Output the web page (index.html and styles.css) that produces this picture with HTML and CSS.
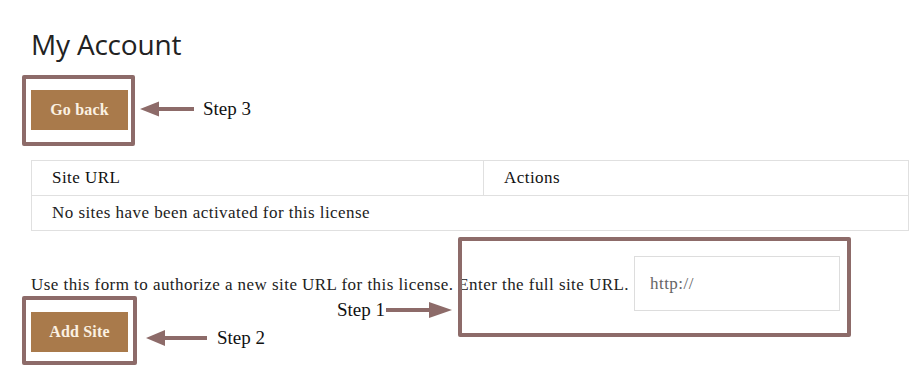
FILE: index.html
```html
<!DOCTYPE html>
<html lang="en">
<head>
    <meta charset="UTF-8">
    <title>My Account</title>
    <link rel="stylesheet" href="styles.css">
</head>
<body>
<div class="page">
    <h1 class="title">My Account</h1>

    <div class="back-row">
        <button class="btn" type="button">Go back</button>
    </div>

    <table class="sites">
        <thead>
            <tr>
                <th class="col-url">Site URL</th>
                <th>Actions</th>
            </tr>
        </thead>
        <tbody>
            <tr>
                <td colspan="2">No sites have been activated for this license</td>
            </tr>
        </tbody>
    </table>

    <form class="add-form">
        <p class="add-line">
            <span>Use this form to authorize a new site URL for this license. Enter the full site URL.</span>
            <input class="url-input" type="text" placeholder="http://">
        </p>
        <button class="btn" type="button">Add Site</button>
    </form>

    <!-- annotations drawn over the page -->
    <div class="frame frame-back"></div>
    <div class="frame frame-add"></div>
    <div class="frame frame-url"></div>

    <div class="note note-3">
        <svg width="54" height="18" viewBox="0 0 54 18"><path d="M0 9 L19 1.5 L19 7 L54 7 L54 11 L19 11 L19 16.5 Z" fill="#8d6b69"/></svg>
        <span>Step 3</span>
    </div>
    <div class="note note-2">
        <svg width="61" height="18" viewBox="0 0 61 18"><path d="M0 9 L19 1 L19 7 L61 7 L61 11 L19 11 L19 17 Z" fill="#8d6b69"/></svg>
        <span>Step 2</span>
    </div>
    <div class="note note-1">
        <span>Step 1</span>
        <svg width="66" height="18" viewBox="0 0 66 18"><path d="M66 9 L43 1 L43 7 L0 7 L0 11 L43 11 L43 17 Z" fill="#8d6b69"/></svg>
    </div>
</div>
</body>
</html>
```

FILE: styles.css
```css
body,div,h1,p,form,table{margin:0;padding:0;}
body{background:#fff;color:#222;font:17px/22px "Liberation Serif","Times New Roman",serif;letter-spacing:0.45px;}
.page{position:relative;width:923px;height:376px;padding-left:31px;box-sizing:border-box;overflow:hidden;}

.title{margin-top:27px;font:400 28px/34px "Open Sans",sans-serif;color:#222;letter-spacing:-0.2px;}

.back-row{margin-top:29px;}
.btn{display:block;width:97px;height:40px;border:0;background:#a97a4b;color:#fbf1e2;font:600 16px/40px "Liberation Serif",serif;letter-spacing:0.2px;padding:0;cursor:pointer;}

.sites{margin-top:30px;width:878px;border-collapse:collapse;border:1px solid #e0e0e0;}
.sites th,.sites td{height:34px;padding:0 20px;text-align:left;border:1px solid #e0e0e0;font-size:17px;color:#222;}
.sites th{font-weight:400;color:#111;}
.sites .col-url{width:411px;}

.add-form{margin-top:25px;}
.add-line{display:flex;align-items:center;height:55px;}
.add-line span{padding-top:2px;white-space:nowrap;}
.url-input{margin-left:5px;width:206px;height:55px;box-sizing:border-box;border:1px solid #ddd;padding:0 15px;font:17px "Liberation Serif",serif;letter-spacing:0.45px;color:#555;outline:none;}
.url-input::placeholder{color:#666;}
.add-form .btn{margin-top:1px;}

.frame{position:absolute;border:4px solid #8d6b69;border-radius:2px;box-sizing:border-box;}
.frame-back{left:22px;top:75px;width:113px;height:71px;}
.frame-add{left:22px;top:296px;width:115px;height:69px;}
.frame-url{left:458px;top:237px;width:393px;height:100px;}

.note{position:absolute;display:flex;align-items:center;font:19px/22px "Liberation Serif","Times New Roman",serif;letter-spacing:0;color:#111;}
.note svg{display:block;}
.note-3{left:140px;top:98px;gap:9px;}
.note-2{left:146px;top:327px;gap:10px;}
.note-1{left:337px;top:299px;gap:1px;}
```
